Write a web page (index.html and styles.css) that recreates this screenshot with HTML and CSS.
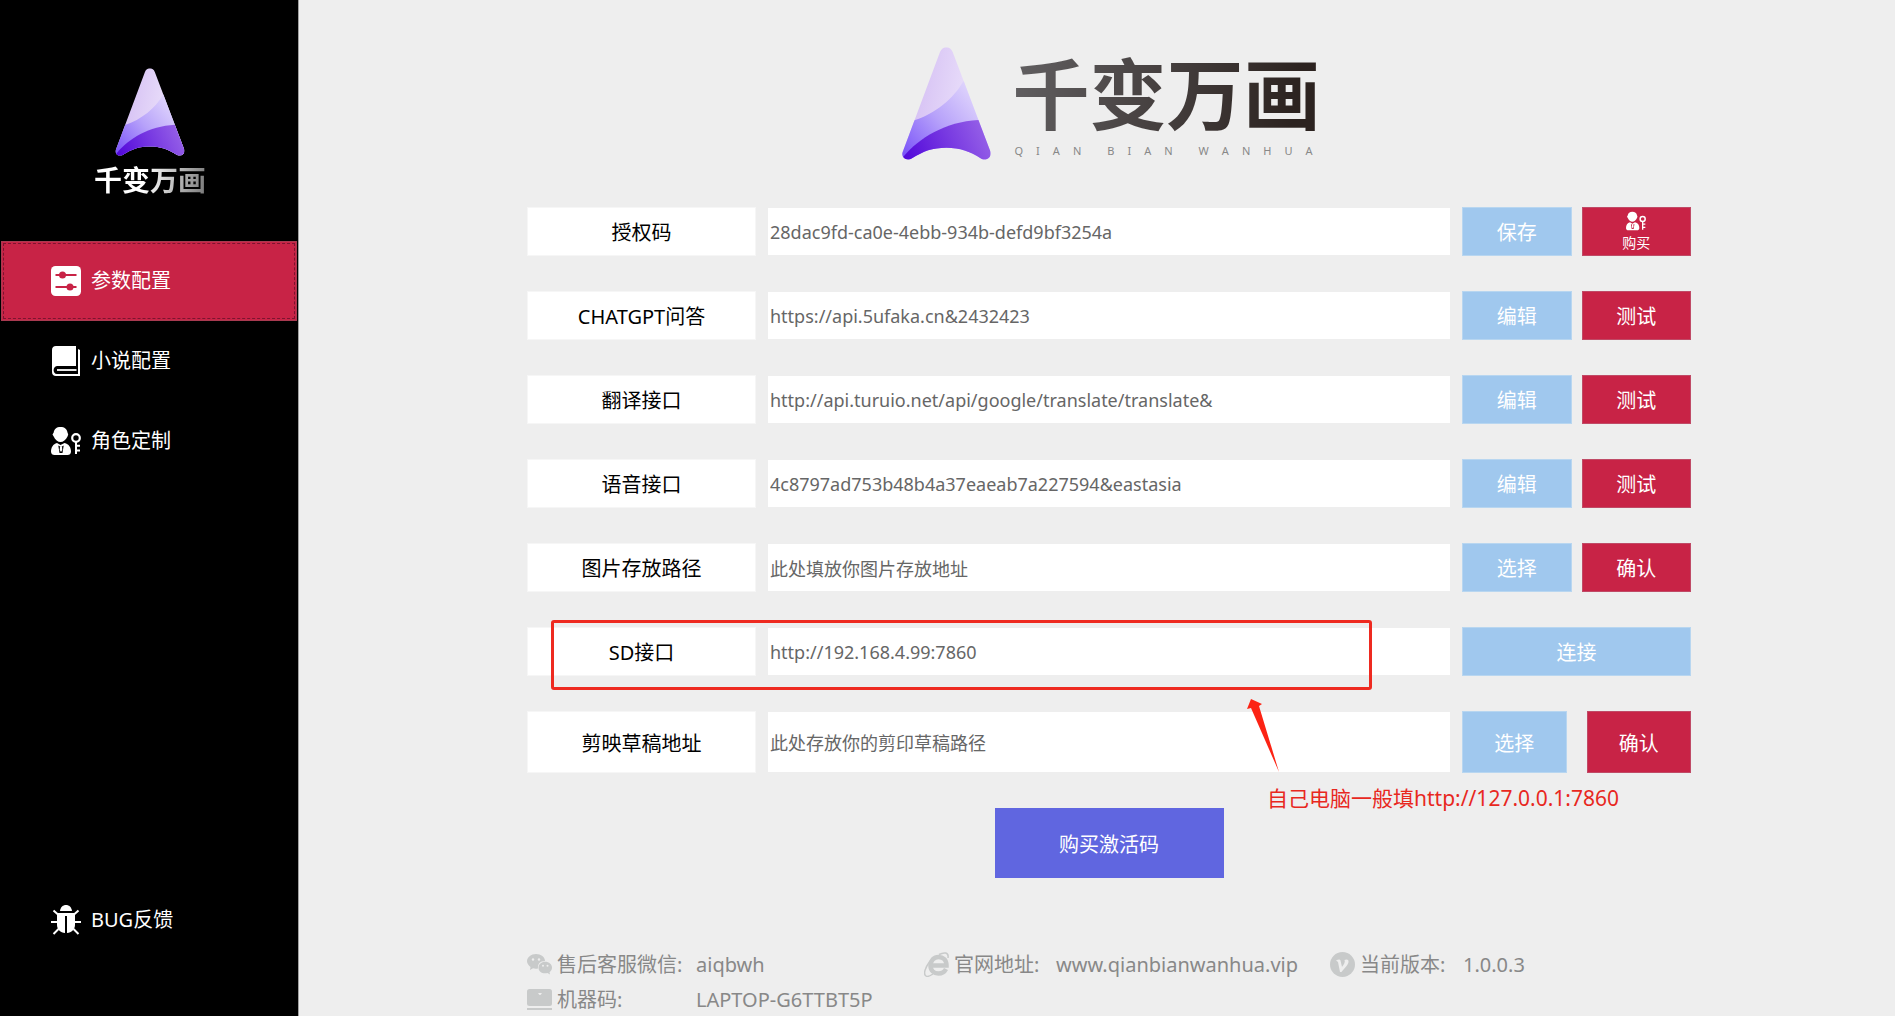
FILE: index.html
```html
<!DOCTYPE html>
<html lang="zh-CN">
  <head>
    <meta charset="UTF-8" />
    <meta name="viewport" content="width=device-width, initial-scale=1.0" />
    <title>千变万画</title>
    <link rel="stylesheet" href="styles.css">
  </head>
  <body>
    <!-- shared shapes -->
    <svg class="defs" width="0" height="0" aria-hidden="true">
      <defs>
        <linearGradient id="mark-top" x1="0" y1="0.3" x2="1" y2="0.5">
          <stop offset="0" stop-color="#d0b8f2" />
          <stop offset="1" stop-color="#f3edfd" />
        </linearGradient>
        <linearGradient id="mark-mid" x1="0" y1="1" x2="0.9" y2="0.2">
          <stop offset="0" stop-color="#6f45f8" />
          <stop offset="0.5" stop-color="#b7a2fa" />
          <stop offset="1" stop-color="#ece4fd" />
        </linearGradient>
        <linearGradient id="mark-low" x1="0" y1="0.6" x2="1" y2="0.4">
          <stop offset="0" stop-color="#5208da" />
          <stop offset="1" stop-color="#9a66e8" />
        </linearGradient>
        <clipPath id="mark-clip">
          <path d="M174 66Q180 52 193 52Q206 52 212 66L325 364C330 382 314 394 298 386C262 363 235 353 193 353C150 353 125 363 90 385C74 395 56 382 62 366Z" />
        </clipPath>
      </defs>
      <symbol id="mark" viewBox="60 51 267 339">
        <g clip-path="url(#mark-clip)">
          <path fill="url(#mark-top)" d="M50 40H340V400H50Z" />
          <path fill="url(#mark-mid)" d="M50 400V284L97 271C160 250 215 205 243 155L340 100V400Z" />
          <path fill="url(#mark-low)" d="M50 400L66 378C110 325 190 275 289 270L340 268V400Z" />
        </g>
      </symbol>
      <symbol id="user-key" viewBox="0 0 30 30">
        <path fill="currentColor" d="M9.500 1C13.500 1 16 3 16.500 6.500L17.200 8.500L16.500 10.500C15 14 12 16 9.500 16S4 14 2.700 10.500L1.500 8.500L2.700 6.500C3.200 3 5.500 1 9.500 1Z" />
        <path fill="currentColor" fill-rule="evenodd" d="M6 17L9.500 19L13.500 17C18 18 20 21.500 20 25.500C20 28 18.500 29 16.500 29H3.500C1.500 29 0 28 0 25.500C0 21.500 2 18 6 17ZM7.300 19.500L8.500 27H11.500L12.700 19.500L10 21Z" />
        <path fill="currentColor" d="M9 20.500H11L11.300 24L10 26L8.700 24Z" />
        <circle cx="25" cy="12" r="3.800" fill="none" stroke="currentColor" stroke-width="2.200" />
        <path fill="none" stroke="currentColor" stroke-width="2" d="M25 16V28M25 19.800H29M25 24.500H29" />
      </symbol>
    </svg>

    <div class="app">
      <aside class="sidebar">
        <div class="side-logo">
          <svg class="side-mark" aria-hidden="true"><use href="#mark" /></svg>
          <span class="side-name">千变万画</span>
        </div>
        <nav class="menu">
          <button type="button" class="menu-item active">
            <svg class="menu-icon" viewBox="0 0 30 30" aria-hidden="true">
              <rect width="30" height="30" rx="4.500" fill="#fff" />
              <path stroke="#c82346" stroke-width="1.800" d="M4.500 9H25.500M4.500 21H25.500" />
              <circle cx="11.500" cy="9" r="3.500" fill="#c82346" />
              <circle cx="19" cy="21" r="3.500" fill="#c82346" />
            </svg>
            参数配置
          </button>
          <button type="button" class="menu-item">
            <svg class="menu-icon" viewBox="0 0 30 30" aria-hidden="true">
              <path fill="#fff" fill-rule="evenodd" d="M5 0H25V20H6C1.500 20.500 1.500 28 6 28H27V3L29 4V30H5C2.500 30 1 28.500 1 26V4C1 1.500 2.500 0 5 0Z" />
              <path stroke="#fff" stroke-width="1.800" d="M6 24H25.500" />
            </svg>
            小说配置
          </button>
          <button type="button" class="menu-item">
            <svg class="menu-icon" aria-hidden="true"><use href="#user-key" /></svg>
            角色定制
          </button>
          <button type="button" class="menu-item feedback">
            <svg class="menu-icon" viewBox="0 0 30 30" aria-hidden="true">
              <path fill="#fff" d="M9 6C9.500 2 12 0 15 0S20.500 2 21 6Z" />
              <path fill="#fff" d="M6 8H24V20C24 24.500 20.500 27.500 16 28V11H14V28C9.500 27.500 6 24.500 6 20Z" />
              <path stroke="#fff" stroke-width="2" fill="none" d="M2.500 5.500L7 9.500M27.500 5.500L23 9.500M0 17H7M30 17H23M2.500 29L7.500 24M27.500 29L22.500 24" />
            </svg>
            BUG反馈
          </button>
        </nav>
      </aside>

      <main class="content">
        <header class="brand">
          <svg class="brand-mark" aria-hidden="true"><use href="#mark" /></svg>
          <div class="brand-text">
            <h1 class="brand-name">千变万画</h1>
            <p class="brand-sub">Q I A N &nbsp;B I A N &nbsp;W A N H U A</p>
          </div>
        </header>

        <form class="config">
          <div class="row">
            <label class="name" for="license">授权码</label>
            <input class="field" id="license" type="text" value="28dac9fd-ca0e-4ebb-934b-defd9bf3254a">
            <div class="actions">
              <button type="button" class="btn blue">保存</button>
              <button type="button" class="btn red buy">
                <svg class="buy-icon" aria-hidden="true"><use href="#user-key" /></svg>
                购买
              </button>
            </div>
          </div>
          <div class="row">
            <label class="name" for="chatgpt">CHATGPT问答</label>
            <input class="field" id="chatgpt" type="text" value="https://api.5ufaka.cn&amp;2432423">
            <div class="actions">
              <button type="button" class="btn blue">编辑</button>
              <button type="button" class="btn red">测试</button>
            </div>
          </div>
          <div class="row">
            <label class="name" for="translate">翻译接口</label>
            <input class="field" id="translate" type="text" value="http://api.turuio.net/api/google/translate/translate&amp;">
            <div class="actions">
              <button type="button" class="btn blue">编辑</button>
              <button type="button" class="btn red">测试</button>
            </div>
          </div>
          <div class="row">
            <label class="name" for="voice">语音接口</label>
            <input class="field" id="voice" type="text" value="4c8797ad753b48b4a37eaeab7a227594&amp;eastasia">
            <div class="actions">
              <button type="button" class="btn blue">编辑</button>
              <button type="button" class="btn red">测试</button>
            </div>
          </div>
          <div class="row">
            <label class="name" for="images">图片存放路径</label>
            <input class="field" id="images" type="text" value="此处填放你图片存放地址">
            <div class="actions">
              <button type="button" class="btn blue">选择</button>
              <button type="button" class="btn red">确认</button>
            </div>
          </div>
          <div class="row">
            <label class="name" for="sd">SD接口</label>
            <input class="field" id="sd" type="text" value="http://192.168.4.99:7860">
            <div class="actions">
              <button type="button" class="btn blue">连接</button>
            </div>
            <!-- 标注层 -->
            <div class="mark-box"></div>
            <svg class="mark-arrow" viewBox="0 0 32 73" aria-hidden="true">
              <path fill="#fc2314" d="M4 0L15 5L12 7L32 73L4 9L0 10Z" />
            </svg>
            <p class="mark-note">自己电脑一般填http://127.0.0.1:7860</p>
          </div>
          <div class="row tall">
            <label class="name" for="draft">剪映草稿地址</label>
            <input class="field" id="draft" type="text" value="此处存放你的剪印草稿路径">
            <div class="actions">
              <button type="button" class="btn blue">选择</button>
              <button type="button" class="btn red">确认</button>
            </div>
          </div>
          <button type="button" class="activate">购买激活码</button>
        </form>

        <footer class="info">
          <span class="info-label">
            <svg class="info-icon" viewBox="0 0 25 25" aria-hidden="true">
              <path fill="#c8caca" d="M9 2C14 2 18 5 18 9C13 9 10.500 12 11 16.500C9 17 7.500 16.800 6 16.300L3 18L3.500 15C1.500 13.500 0 11.500 0 9.300C0 5.300 4 2 9 2Z" />
              <path fill="#c8caca" d="M18.200 9.800C22 9.800 25 12.300 25 15.500C25 17.500 24 19 22.500 20.200L23 22.500L20.500 21C15.500 22.300 11.500 19.500 11.500 15.700C11.500 12.300 14.500 9.800 18.200 9.800Z" />
              <g fill="#eee">
                <circle cx="6" cy="7.500" r="1.200" /><circle cx="12" cy="7.500" r="1.200" />
                <circle cx="16" cy="13.800" r="1" /><circle cx="20.500" cy="13.800" r="1" />
              </g>
            </svg>
            售后客服微信:
          </span>
          <span>aiqbwh</span>
          <span class="info-label">
            <svg class="info-icon" viewBox="0 0 25 25" aria-hidden="true">
              <path fill="none" stroke="#c8caca" stroke-width="4.500" d="M6 13.500H22.500C22.500 8 19 5 14.500 5S6.500 8.500 6.500 13.500S10 21.500 14.500 21.500C18 21.500 20.500 20 22 17" />
              <path fill="none" stroke="#c8caca" stroke-width="1.500" d="M15 2.500C20 0 25 0 24 6M6 9C1 16 -1 22 2 24C3.500 25 6 24 9 22" />
            </svg>
            官网地址:
          </span>
          <a class="site" href="#">www.qianbianwanhua.vip</a>
          <span class="info-label">
            <svg class="info-icon" viewBox="0 0 25 25" aria-hidden="true">
              <circle cx="12.500" cy="12.500" r="12.500" fill="#c8caca" />
              <path fill="#eee" d="M6 8.500C8 7.500 10 7 10.500 8.500L12 15C14 12 15.500 10 14.500 8C16 7 19 7 18.500 10C18 13 14 17 11.500 20H10L8 10Z" />
            </svg>
            当前版本:
          </span>
          <span>1.0.0.3</span>
          <span class="info-label">
            <svg class="info-icon" viewBox="0 0 25 25" aria-hidden="true">
              <rect y="2" width="25" height="17" rx="2.500" fill="#c8caca" />
              <path fill="#eee" d="M11 6H15L13.500 8H12.500Z" />
              <path fill="#c8caca" d="M0 21H25V23H0Z" />
            </svg>
            机器码:
          </span>
          <span>LAPTOP-G6TTBT5P</span>
        </footer>
      </main>
    </div>
  </body>
</html>
```
FILE: styles.css
```css
* {
  box-sizing: border-box;
}
body {
  margin: 0;
  background: #eee;
  font-family: 'Noto Sans', 'Noto Sans CJK SC', sans-serif;
  font-size: 20px;
}
button,
input {
  font-family: inherit;
  font-size: inherit;
}
button {
  padding: 0;
  border: none;
  color: #fff;
  cursor: pointer;
}
.defs {
  position: absolute;
}
.app {
  display: flex;
  min-height: 100vh;
}

/* sidebar */
.sidebar {
  display: flex;
  flex-direction: column;
  flex: none;
  width: 299px;
  padding-bottom: 56px;
  background: #000;
  border-right: 1px solid #a0a0a0;
  border-bottom: 1px solid #a0a0a0;
}
.side-logo {
  display: flex;
  flex-direction: column;
  align-items: center;
  height: 241px;
  padding: 68px 0 0 2px;
}
.side-mark {
  width: 70px;
  height: 88px;
}
.side-name {
  margin-top: 8px;
  font-size: 28px;
  font-weight: 700;
  line-height: 32px;
  color: transparent;
  background: linear-gradient(100deg, #fff 45%, #777);
  background-clip: text;
  -webkit-background-clip: text;
}
.menu {
  display: flex;
  flex-direction: column;
  flex: 1;
}
.menu-item {
  display: flex;
  align-items: center;
  gap: 10px;
  height: 80px;
  margin: 0 1px;
  padding: 0 0 4px 50px;
  background: #000;
}
.menu-item.active {
  background: #c82346;
  border: 1px solid #a83a50;
  padding-left: 49px;
  outline: 1px dashed #7c1430;
  outline-offset: -3px;
}
.menu-icon {
  width: 30px;
  height: 30px;
  margin-top: 4px;
}
.feedback {
  margin-top: auto;
}

/* content */
.content {
  flex: 1;
  padding: 47px 204px 0 228px;
}
.brand {
  display: flex;
  justify-content: center;
  gap: 22px;
  padding-left: 4px;
}
.brand-mark {
  width: 89px;
  height: 113px;
}
.brand-name {
  margin: 0;
  font-size: 77px;
  line-height: 96px;
  color: transparent;
  background: linear-gradient(100deg, #626062, #2c2320 90%);
  background-clip: text;
  -webkit-background-clip: text;
}
.brand-sub {
  margin: 0 8px 0 2px;
  font-size: 11px;
  line-height: 16px;
  color: #888;
  text-align-last: justify;
}
.config {
  display: flex;
  flex-direction: column;
  gap: 35px;
  margin-top: 47px;
}
.row {
  position: relative;
  display: flex;
  gap: 12px;
  height: 49px;
}
.row.tall {
  height: 62px;
}
.name {
  display: flex;
  align-items: center;
  justify-content: center;
  width: 229px;
  background: #fff;
  border: 1px solid #f6f6f6;
}
.field {
  flex: 1;
  min-width: 0;
  margin: 1px 0;
  padding: 0 2px;
  border: none;
  font-size: 18px;
  color: #666;
  background: #fff;
}
.actions {
  display: flex;
  gap: 10px;
  width: 229px;
}
.tall .actions {
  gap: 20px;
}
.btn {
  flex: 1;
}
.blue {
  background: #a0c8ee;
  border: 1px solid #b8d6f0;
}
.red {
  background: #c82346;
  border: 1px solid #c04a66;
}
.buy {
  display: flex;
  flex-direction: column;
  align-items: center;
  padding-top: 3px;
  font-size: 14px;
  line-height: 24px;
}
.buy-icon {
  width: 20px;
  height: 20px;
}
.activate {
  align-self: center;
  width: 229px;
  height: 70px;
  background: #6066e0;
}

/* annotation over the SD row */
.mark-box {
  position: absolute;
  top: -7px;
  left: 24px;
  right: 319px;
  height: 70px;
  border: 3px solid #ee2a20;
  border-radius: 3px;
  pointer-events: none;
}
.mark-arrow {
  position: absolute;
  top: 72px;
  right: 412px;
  width: 32px;
  height: 73px;
  z-index: 1;
}
.mark-note {
  position: absolute;
  top: 156px;
  right: 72px;
  margin: 0;
  font-size: 21px;
  line-height: 30px;
  color: #e8281e;
  white-space: nowrap;
}

/* footer */
.info {
  display: grid;
  grid-template-columns: 169px 228px 132px 274px 133px auto;
  align-items: center;
  margin-top: 69px;
  line-height: 35px;
  color: #888;
}
.info-label {
  display: flex;
  align-items: center;
  gap: 5px;
}
.info-icon {
  width: 25px;
  height: 25px;
}
.site {
  color: inherit;
  text-decoration: none;
}
```
